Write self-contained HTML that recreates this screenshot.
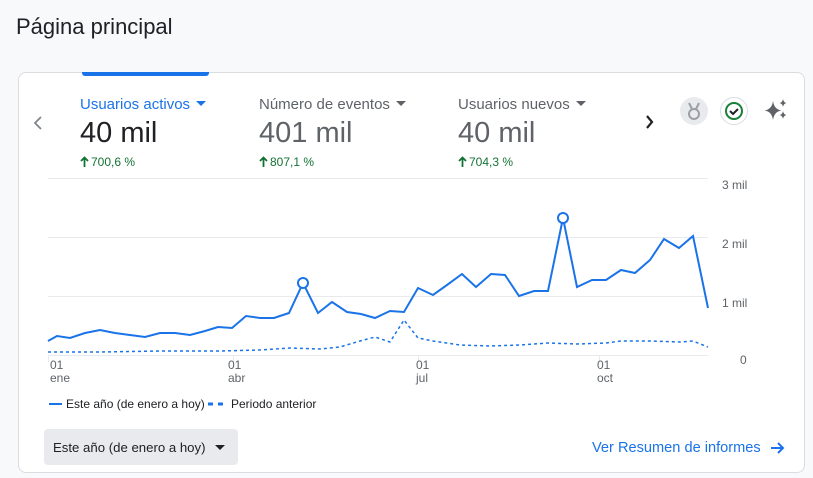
<!DOCTYPE html>
<html><head><meta charset="utf-8"><style>
*{margin:0;padding:0;box-sizing:border-box}
body{width:813px;height:478px;background:#f8f9fa;font-family:"Liberation Sans",Arial,sans-serif;position:relative;overflow:hidden;color:#202124}
.t{position:absolute;white-space:nowrap}
.card{position:absolute;left:18px;top:72px;width:787px;height:401px;background:#fff;border:1px solid #dadce0;border-radius:8px}
.tri{display:inline-block;width:0;height:0;border-left:5px solid transparent;border-right:5px solid transparent;border-top:5px solid #5f6368;vertical-align:middle;margin-left:6px;position:relative;top:-2px}
.up{display:inline-block;width:9px;height:11px;vertical-align:-1px;margin-right:2px}
</style></head><body>
<div class="t" style="left:16px;top:14px;font-size:22px;color:#202124">Página principal</div>
<div class="card"></div>
<div style="position:absolute;left:82px;top:72px;width:127px;height:4px;background:#1a73e8;border-radius:0 0 3px 3px"></div>
<div class="t" style="left:80px;top:96px;font-size:15px;color:#1a73e8">Usuarios activos<span class="tri" style="border-top-color:#1a73e8"></span></div>
<div class="t" style="left:80px;top:117px;font-size:29px;color:#202124">40 mil</div>
<div class="t" style="left:80px;top:155px;font-size:12px;color:#137333"><svg class="up" viewBox="0 0 9 11"><path d="M4.5 11V2M1 5l3.5-3.5L8 5" fill="none" stroke="#137333" stroke-width="1.8"/></svg>700,6 %</div>
<div class="t" style="left:259px;top:96px;font-size:15px;color:#5f6368">Número de eventos<span class="tri"></span></div>
<div class="t" style="left:259px;top:117px;font-size:29px;color:#5f6368">401 mil</div>
<div class="t" style="left:259px;top:155px;font-size:12px;color:#137333"><svg class="up" viewBox="0 0 9 11"><path d="M4.5 11V2M1 5l3.5-3.5L8 5" fill="none" stroke="#137333" stroke-width="1.8"/></svg>807,1 %</div>
<div class="t" style="left:458px;top:96px;font-size:15px;color:#5f6368">Usuarios nuevos<span class="tri"></span></div>
<div class="t" style="left:458px;top:117px;font-size:29px;color:#5f6368">40 mil</div>
<div class="t" style="left:458px;top:155px;font-size:12px;color:#137333"><svg class="up" viewBox="0 0 9 11"><path d="M4.5 11V2M1 5l3.5-3.5L8 5" fill="none" stroke="#137333" stroke-width="1.8"/></svg>704,3 %</div>
<div style="position:absolute;left:44px;top:429px;width:194px;height:36px;background:#e8eaed;border-radius:4px"></div>
<div class="t" style="left:53px;top:440px;font-size:13.2px;color:#202124">Este año (de enero a hoy)</div>
<svg style="position:absolute;left:0;top:0" width="813" height="478">
<path d="M41 117l-6 6 6 6" fill="none" stroke="#80868b" stroke-width="1.8"/>
<path d="M647 116l5 6-5 6" fill="none" stroke="#202124" stroke-width="2.2"/>
<circle cx="694" cy="111" r="14" fill="#e8eaed"/>
<circle cx="694" cy="114" r="5" fill="none" stroke="#9aa0a6" stroke-width="2"/>
<path d="M689 103l3 6M699 103l-3 6" stroke="#9aa0a6" stroke-width="2"/>
<circle cx="734" cy="111" r="13.5" fill="#fff" stroke="#dadce0"/>
<circle cx="734" cy="111" r="8" fill="none" stroke="#188038" stroke-width="2"/>
<path d="M730 111l3 3 5-5" fill="none" stroke="#202124" stroke-width="2"/>
<path d="M773 101q1.2 8.5 8.5 9.5q-7.3 1-8.5 9.5q-1.2-8.5-8.5-9.5q7.3-1 8.5-9.5z" fill="#5f6368"/>
<path d="M783 99q.6 3.5 3.5 4q-2.9.5-3.5 4q-.6-3.5-3.5-4q2.9-.5 3.5-4zM783 111q.6 3.5 3.5 4q-2.9.5-3.5 4q-.6-3.5-3.5-4q2.9-.5 3.5-4z" fill="#5f6368"/>
<g stroke="#e8eaed" stroke-width="1">
<line x1="48" y1="178.5" x2="708" y2="178.5"/><line x1="48" y1="237.5" x2="708" y2="237.5"/><line x1="48" y1="296.5" x2="708" y2="296.5"/><line x1="48" y1="355.5" x2="708" y2="355.5"/>
<line x1="48.5" y1="355" x2="48.5" y2="362"/><line x1="233.5" y1="355" x2="233.5" y2="362"/><line x1="418.5" y1="355" x2="418.5" y2="362"/><line x1="599.5" y1="355" x2="599.5" y2="362"/>
</g>
<path d="M48 352L100 352L160 351L220 351L260 350L290 348L320 349L340 347L360 341L375 337L390 342L404 320L418 338L433 341L460 345L490 346L520 345L548 343L577 344L606 343L621 341L650 341L680 342L693 341L708 347" fill="none" stroke="#1a73e8" stroke-width="1.5" stroke-dasharray="3 3"/>
<path d="M48 341L57 336L70 338L85 333L100 330L115 333L130 335L145 337L160 333L175 333L190 335L205 331L218 327L232 328L246 316L260 318L274 318L289 313L303 283L318 313L332 302L347 312L361 314L375 318L390 311L404 312L418 288L433 295L447 285L462 274L476 287L491 274L505 275L519 296L534 291L548 291L563 218L577 287L592 280L606 280L621 270L635 273L650 260L664 239L679 248L693 236L708 308" fill="none" stroke="#1a73e8" stroke-width="2"/>
<circle cx="303" cy="283" r="5" fill="#fff" stroke="#1a73e8" stroke-width="2"/>
<circle cx="563" cy="218" r="5" fill="#fff" stroke="#1a73e8" stroke-width="2"/>
<line x1="49" y1="404" x2="62" y2="404" stroke="#1a73e8" stroke-width="2"/>
<line x1="208" y1="404" x2="226" y2="404" stroke="#1a73e8" stroke-width="3" stroke-dasharray="5 5"/>
<path d="M771 448h12M778 443l5 5-5 5" fill="none" stroke="#1a73e8" stroke-width="2"/>
<path d="M215 445h10l-5 5z" fill="#202124"/>
</svg>
<div class="t" style="left:722px;top:178px;font-size:12px;color:#5f6368">3 mil</div>
<div class="t" style="left:722px;top:237px;font-size:12px;color:#5f6368">2 mil</div>
<div class="t" style="left:722px;top:296px;font-size:12px;color:#5f6368">1 mil</div>
<div class="t" style="left:740px;top:353px;font-size:12px;color:#5f6368">0</div>
<div class="t" style="left:50px;top:359px;font-size:12px;line-height:13px;color:#5f6368">01<br>ene</div>
<div class="t" style="left:228px;top:359px;font-size:12px;line-height:13px;color:#5f6368">01<br>abr</div>
<div class="t" style="left:416px;top:359px;font-size:12px;line-height:13px;color:#5f6368">01<br>jul</div>
<div class="t" style="left:597px;top:359px;font-size:12px;line-height:13px;color:#5f6368">01<br>oct</div>
<div class="t" style="left:66px;top:397px;font-size:12px;color:#202124">Este año (de enero a hoy)</div>
<div class="t" style="left:231px;top:397px;font-size:12px;color:#202124">Periodo anterior</div>
<div class="t" style="left:592px;top:440px;font-size:14.6px;color:#1a73e8">Ver Resumen de informes</div>
</body></html>
